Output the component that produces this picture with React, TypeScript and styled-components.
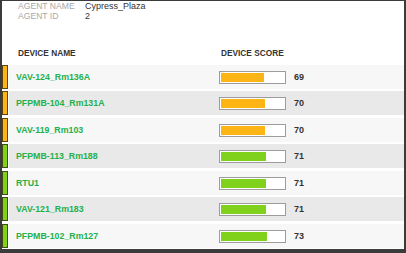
import React from "react";
import styled, { createGlobalStyle } from "styled-components";

const GlobalStyle = createGlobalStyle`
  html, body { margin: 0; padding: 0; background: #ffffff; }
  body { font-family: "Liberation Sans", Arial, sans-serif; }
`;

type Level = "warn" | "ok";

interface Device {
  name: string;
  score: number;
  level: Level;
}

const devices: Device[] = [
  { name: "VAV-124_Rm136A", score: 69, level: "warn" },
  { name: "PFPMB-104_Rm131A", score: 70, level: "warn" },
  { name: "VAV-119_Rm103", score: 70, level: "warn" },
  { name: "PFPMB-113_Rm188", score: 71, level: "ok" },
  { name: "RTU1", score: 71, level: "ok" },
  { name: "VAV-121_Rm183", score: 71, level: "ok" },
  { name: "PFPMB-102_Rm127", score: 73, level: "ok" },
];

const levelColor: Record<Level, string> = {
  warn: "#fdb515",
  ok: "#7fd11b",
};

const Frame = styled.div`
  width: 406px;
  height: 253px;
  box-sizing: border-box;
  border-style: solid;
  border-color: #3b3b3b;
  border-width: 1px 2px 4px 2px;
  background: #ffffff;
  overflow: hidden;
  display: flex;
  flex-direction: column;
`;

const AgentInfo = styled.div`
  padding: 0 0 0 16px;
  display: grid;
  grid-template-columns: 67px auto;
  line-height: 10px;
`;

const InfoLabel = styled.span`
  font-size: 8.6px;
  color: #a8a8a8;
  line-height: 10px;
`;

const InfoValue = styled.span`
  font-size: 9px;
  color: #333333;
  line-height: 10px;
`;

const HeadingRow = styled.div`
  margin-top: 27px;
  padding-left: 16px;
  display: flex;
  height: 10px;
  line-height: 10px;
`;

const Heading = styled.span<{ $width?: number }>`
  font-size: 8.3px;
  font-weight: bold;
  color: #333333;
  ${(p) => (p.$width ? `width: ${p.$width}px;` : "")}
`;

const Rows = styled.div`
  margin-top: 7px;
  display: flex;
  flex-direction: column;
`;

const Row = styled.div`
  display: flex;
  height: 24px;
  margin-bottom: 3px;
  &:nth-child(odd) {
    margin-bottom: 2px;
  }
`;

const Stripe = styled.div<{ $color: string }>`
  width: 6px;
  box-sizing: border-box;
  background: ${(p) => p.$color};
  border: 1px solid rgba(50, 40, 20, 0.8);
  margin-right: 1px;
`;

const RowBody = styled.div<{ $shaded: boolean }>`
  flex: 1;
  display: flex;
  align-items: center;
  background: ${(p) => (p.$shaded ? "#e9e9e9" : "#f7f7f7")};
`;

const DeviceName = styled.span`
  width: 203px;
  padding-left: 7px;
  font-size: 8.8px;
  font-weight: bold;
  color: #22b14c;
`;

const ScoreBar = styled.div`
  width: 67px;
  height: 13px;
  box-sizing: border-box;
  border: 1px solid #9c9c9c;
  background: #ffffff;
  padding: 1px;
`;

const ScoreFill = styled.div<{ $color: string }>`
  height: 100%;
  background: ${(p) => p.$color};
`;

const ScoreValue = styled.span`
  margin-left: 8px;
  font-size: 9px;
  font-weight: bold;
  color: #333333;
`;

export default function App() {
  return (
    <>
      <GlobalStyle />
      <Frame>
        <AgentInfo>
          <InfoLabel>AGENT NAME</InfoLabel>
          <InfoValue>Cypress_Plaza</InfoValue>
          <InfoLabel>AGENT ID</InfoLabel>
          <InfoValue>2</InfoValue>
        </AgentInfo>
        <HeadingRow>
          <Heading $width={203}>DEVICE NAME</Heading>
          <Heading>DEVICE SCORE</Heading>
        </HeadingRow>
        <Rows>
          {devices.map((d, i) => (
            <Row key={d.name}>
              <Stripe $color={levelColor[d.level]} />
              <RowBody $shaded={i % 2 === 1}>
                <DeviceName>{d.name}</DeviceName>
                <ScoreBar>
                  <ScoreFill
                    $color={levelColor[d.level]}
                    style={{ width: `${d.score}%` }}
                  />
                </ScoreBar>
                <ScoreValue>{d.score}</ScoreValue>
              </RowBody>
            </Row>
          ))}
        </Rows>
      </Frame>
    </>
  );
}
